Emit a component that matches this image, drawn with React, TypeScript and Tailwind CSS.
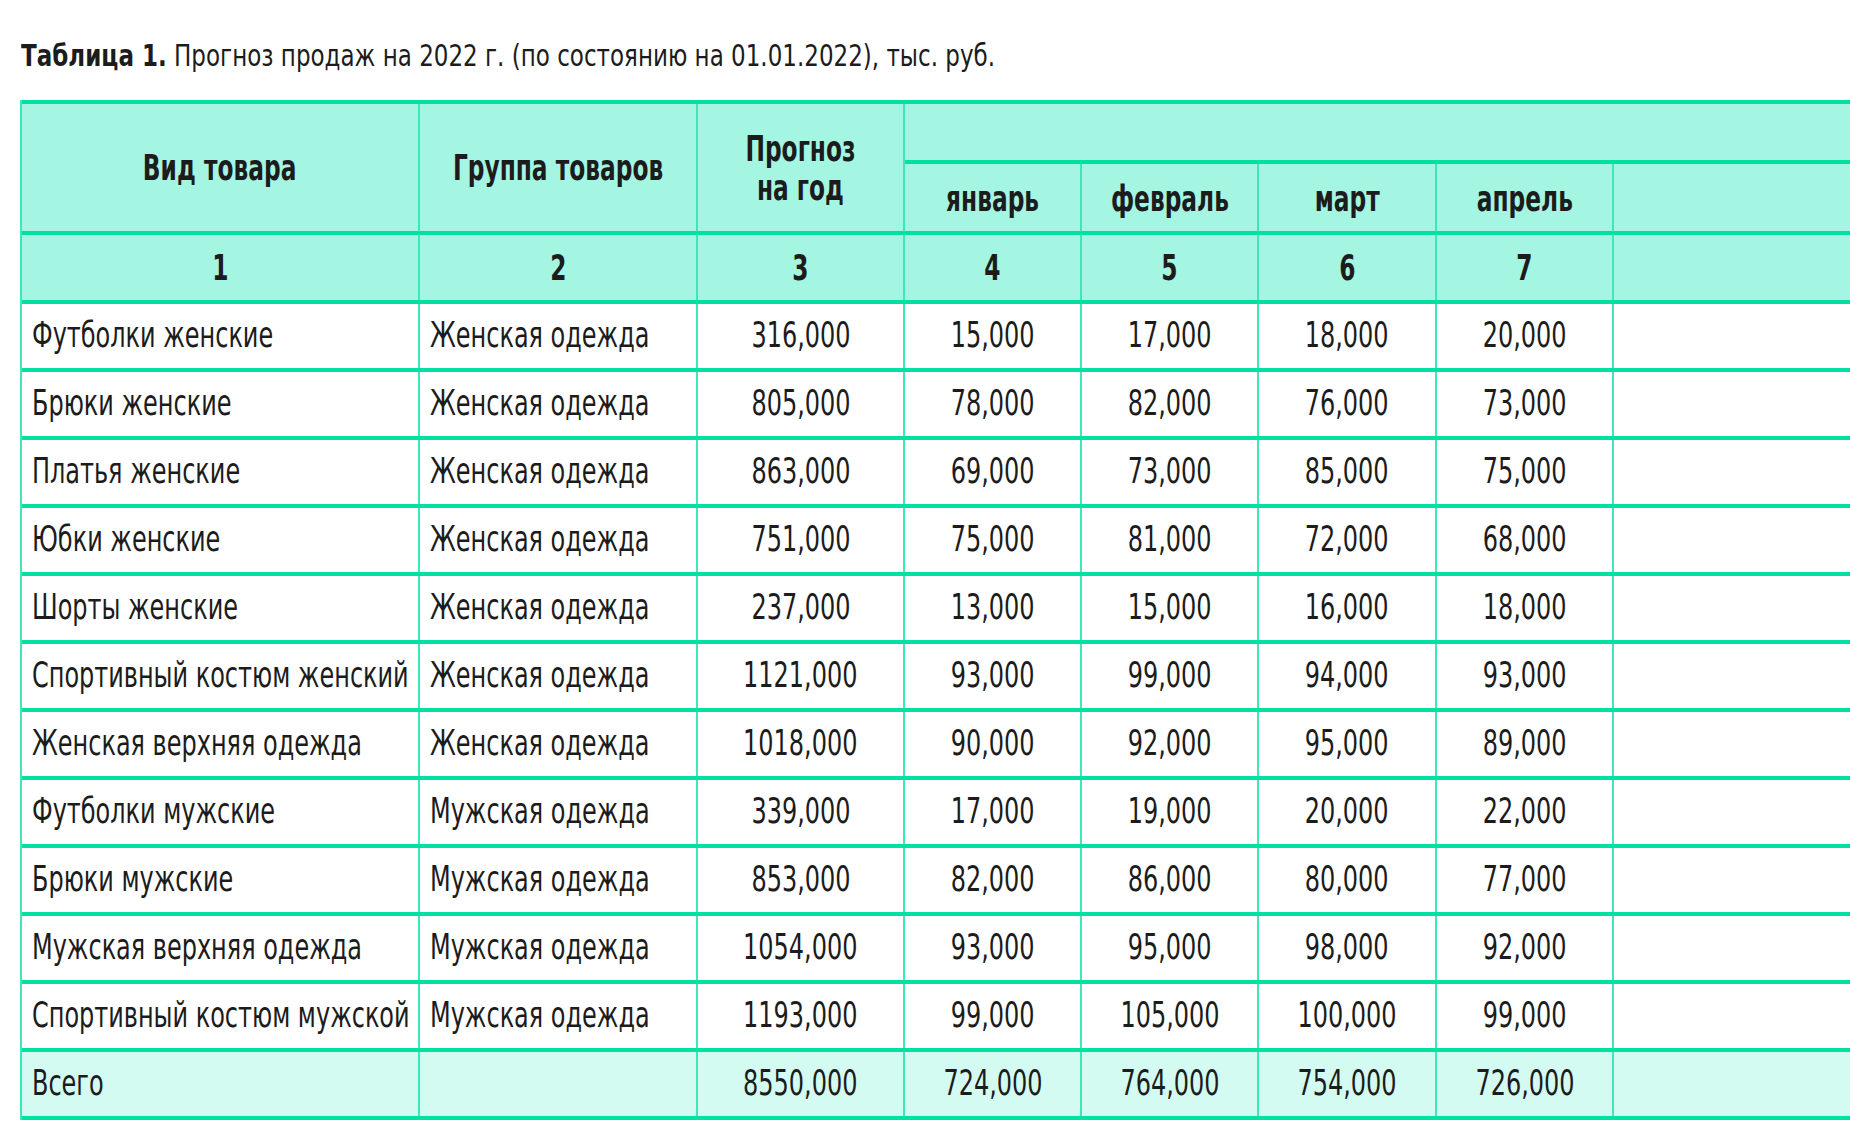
import React from "react";

const rows: [string, string, string, string, string, string, string][] = [
  ["Футболки женские", "Женская одежда", "316,000", "15,000", "17,000", "18,000", "20,000"],
  ["Брюки женские", "Женская одежда", "805,000", "78,000", "82,000", "76,000", "73,000"],
  ["Платья женские", "Женская одежда", "863,000", "69,000", "73,000", "85,000", "75,000"],
  ["Юбки женские", "Женская одежда", "751,000", "75,000", "81,000", "72,000", "68,000"],
  ["Шорты женские", "Женская одежда", "237,000", "13,000", "15,000", "16,000", "18,000"],
  ["Спортивный костюм женский", "Женская одежда", "1121,000", "93,000", "99,000", "94,000", "93,000"],
  ["Женская верхняя одежда", "Женская одежда", "1018,000", "90,000", "92,000", "95,000", "89,000"],
  ["Футболки мужские", "Мужская одежда", "339,000", "17,000", "19,000", "20,000", "22,000"],
  ["Брюки мужские", "Мужская одежда", "853,000", "82,000", "86,000", "80,000", "77,000"],
  ["Мужская верхняя одежда", "Мужская одежда", "1054,000", "93,000", "95,000", "98,000", "92,000"],
  ["Спортивный костюм мужской", "Мужская одежда", "1193,000", "99,000", "105,000", "100,000", "99,000"],
];

const total = ["Всего", "", "8550,000", "724,000", "764,000", "754,000", "726,000"];

const cols = "grid grid-cols-[398px_278px_207px_177px_177px_178px_177px_260px]";
const cell = "flex items-center whitespace-nowrap border-r-2 border-[#3de8b8]";

// condensed text: the original face is a narrow one, so squeeze a regular one
function Left({ children }: { children: React.ReactNode }) {
  return <span className="inline-block origin-left scale-x-[0.74]">{children}</span>;
}

function Mid({ children, bold }: { children: React.ReactNode; bold?: boolean }) {
  return (
    <span className={`inline-block origin-center ${bold ? "scale-x-[0.72]" : "scale-x-[0.74]"}`}>{children}</span>
  );
}

function DataRow({ values, shaded }: { values: string[]; shaded?: boolean }) {
  return (
    <div className={`${cols} h-[68px] border-t-4 border-[#00e0a0] ${shaded ? "bg-[#d4fbf1]" : "bg-white"}`}>
      <div className={`${cell} pb-[2px] pl-[10px]`}>
        <Left>{values[0]}</Left>
      </div>
      <div className={`${cell} pb-[2px] pl-[10px]`}>
        <Left>{values[1]}</Left>
      </div>
      {values.slice(2).map((v, i) => (
        <div key={i} className={`${cell} justify-center pb-[2px]`}>
          <Mid>{v}</Mid>
        </div>
      ))}
      <div />
    </div>
  );
}

export default function App() {
  return (
    <div
      className="relative h-[1139px] w-[1850px] overflow-hidden bg-white text-[#1c1c1c]"
      style={{ fontFamily: '"Liberation Sans Narrow", "DejaVu Sans Condensed", sans-serif' }}
    >
      <p className="whitespace-nowrap pl-[21px] pt-[38px] text-[30px] leading-[36px]">
        <span className="inline-block origin-left scale-x-[0.853]">
          <span className="font-bold">Таблица 1.</span> Прогноз продаж на 2022 г. (по состоянию на 01.01.2022), тыс.
          руб.
        </span>
      </p>

      <div className="ml-[20px] mt-[26px] w-[1900px] border-l-2 border-[#3de8b8] text-[36px]">
        {/* header */}
        <div className={`${cols} h-[131px] border-t-4 border-[#00e0a0] bg-[#a4f6e2] font-bold`}>
          <div className={`${cell} justify-center`}>
            <Mid bold>Вид товара</Mid>
          </div>
          <div className={`${cell} justify-center`}>
            <Mid bold>Группа товаров</Mid>
          </div>
          <div className={`${cell} flex-col justify-center leading-[39px]`}>
            <Mid bold>Прогноз</Mid>
            <Mid bold>на год</Mid>
          </div>
          <div className="col-span-5 flex flex-col">
            <div className="h-[60px] border-b-4 border-[#00e0a0]" />
            <div className="grid flex-1 grid-cols-[177px_177px_178px_177px_260px]">
              {["январь", "февраль", "март", "апрель"].map((m) => (
                <div key={m} className={`${cell} justify-center pt-[2px]`}>
                  <Mid bold>{m}</Mid>
                </div>
              ))}
              <div />
            </div>
          </div>
        </div>

        <div className={`${cols} h-[69px] border-t-4 border-[#00e0a0] bg-[#a4f6e2] font-bold`}>
          {["1", "2", "3", "4", "5", "6", "7"].map((n) => (
            <div key={n} className={`${cell} justify-center`}>
              <Mid bold>{n}</Mid>
            </div>
          ))}
          <div />
        </div>

        {rows.map((r) => (
          <DataRow key={r[0]} values={r} />
        ))}
        <DataRow values={total} shaded />
        <div className="h-[4px] bg-[#00e0a0]" />
      </div>
    </div>
  );
}
